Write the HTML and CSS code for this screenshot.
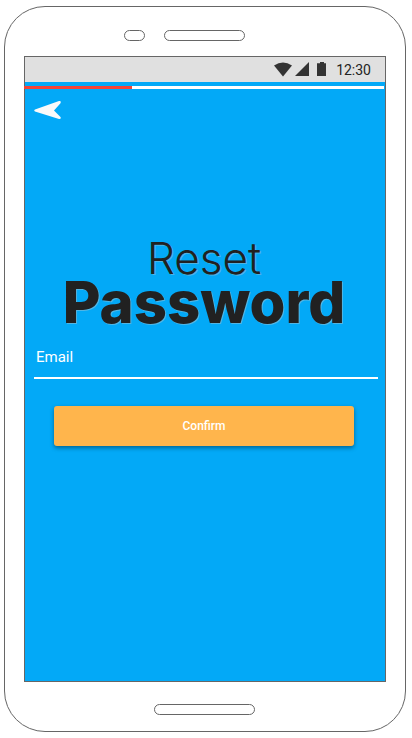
FILE: index.html
```html
<!DOCTYPE html>
<html lang="en">
<head>
<meta charset="utf-8">
<meta name="viewport" content="width=device-width, initial-scale=1">
<title>Reset Password</title>
<link rel="stylesheet" href="styles.css">
</head>
<body>
<div class="phone">
  <div class="phone-top">
    <span class="pill camera"></span>
    <span class="pill speaker"></span>
  </div>
  <div class="screen">
    <div class="status">
      <svg class="status-icons" width="54" height="16" viewBox="0 0 54 16" aria-hidden="true">
        <path d="M0 3.500Q9-2.500 18 3.500L9 14.500Z"/>
        <path d="M21 14L35 0V14Z"/>
        <path d="M43 1.200H46V0H50V1.200H52V14H43Z"/>
      </svg>
      <time class="clock">12:30</time>
    </div>
    <div class="progress" role="progressbar" aria-valuenow="30" aria-valuemin="0" aria-valuemax="100" aria-label="Progress"><div class="progress-fill" style="width: 30%"></div></div>
    <button class="back" type="button" aria-label="Back">
      <svg width="28" height="20" viewBox="0 0 28 20" aria-hidden="true">
        <path d="M1 9.500Q-.5 10.500 1 11.600L25 19Q27.500 19.200 26.500 17L20 10.500L26.500 3.200Q27.500 .5 25 1Z"/>
      </svg>
    </button>
    <form class="reset">
      <h1 class="title"><span class="title-light">Reset</span><span class="title-bold">Password</span></h1>
      <input class="email" type="email" placeholder="Email" aria-label="Email">
      <button class="confirm" type="button">Confirm</button>
    </form>
  </div>
  <div class="phone-bottom"><span class="pill home"></span></div>
</div>
</body>
</html>
```
FILE: styles.css
```css
* { box-sizing: border-box; }
body {
  margin: 0;
  padding: 6px 6px 6px 4px;
  min-height: 100vh;
  display: flex;
  background: #fff;
  font-family: Roboto, "Liberation Sans", sans-serif;
}
.phone {
  flex: 1;
  display: flex;
  flex-direction: column;
  padding: 0 19px;
  border: 1px solid #666;
  border-radius: 41px;
}
.phone-top {
  height: 49px;
  padding: 23px 41px 0 0;
  display: flex;
  justify-content: center;
  gap: 19px;
}
.pill {
  height: 11px;
  border: 1px solid #666;
  border-radius: 6px;
}
.camera { width: 21px; }
.speaker { width: 81px; }
.home { width: 101px; }
.phone-bottom {
  height: 49px;
  padding: 22px 1px 0 0;
  display: flex;
  justify-content: center;
}
.screen {
  flex: 1;
  border: 1px solid #666;
  background: #03a9f7;
}
.status {
  height: 25px;
  padding: 0 14px;
  display: flex;
  align-items: center;
  justify-content: flex-end;
  gap: 8px;
  background: #e0e0e0;
}
.status-icons { fill: #333; }
.clock {
  color: #222;
  font-size: 14px;
  line-height: 24px;
}
.progress {
  height: 3px;
  margin: 4px 1px 0 -1px;
  background: #fff;
}
.progress-fill {
  height: 3px;
  background: #f44336;
}
.back {
  display: block;
  margin: 11px 0 0 9px;
  padding: 0;
  border: 0;
  background: none;
}
.back svg {
  display: block;
  fill: #fafafa;
}
.reset {
  display: flex;
  flex-direction: column;
  margin-top: 112px;
  padding: 0 7px 0 9px;
}
.title {
  margin: 0;
  padding-right: 4px;
  color: #212121;
  font-family: Inter, Roboto, sans-serif;
  text-align: center;
  text-shadow: 1px 1px 0 rgba(200, 200, 200, 0.4);
  white-space: nowrap;
}
.title span { display: block; }
.title-light {
  font-size: 44px;
  font-weight: 300;
  line-height: 52px;
}
.title-bold {
  font-size: 58px;
  font-weight: 800;
  line-height: 36px;
}
.email {
  height: 44px;
  margin-top: 15px;
  padding: 2px 2px 0;
  border: 0;
  border-bottom: 2px solid #fff;
  border-radius: 0;
  outline: 0;
  background: none;
  color: #fff;
  font-family: inherit;
  font-size: 15px;
}
.email::placeholder { color: #fff; opacity: 1; }
.confirm {
  height: 40px;
  margin: 27px 24px 0 20px;
  border: 0;
  border-radius: 3px;
  background: #ffb54c;
  box-shadow: 0 2px 4px rgba(0, 0, 0, 0.4);
  color: #fff;
  font-family: inherit;
  font-size: 12px;
  font-weight: 500;
}
```
